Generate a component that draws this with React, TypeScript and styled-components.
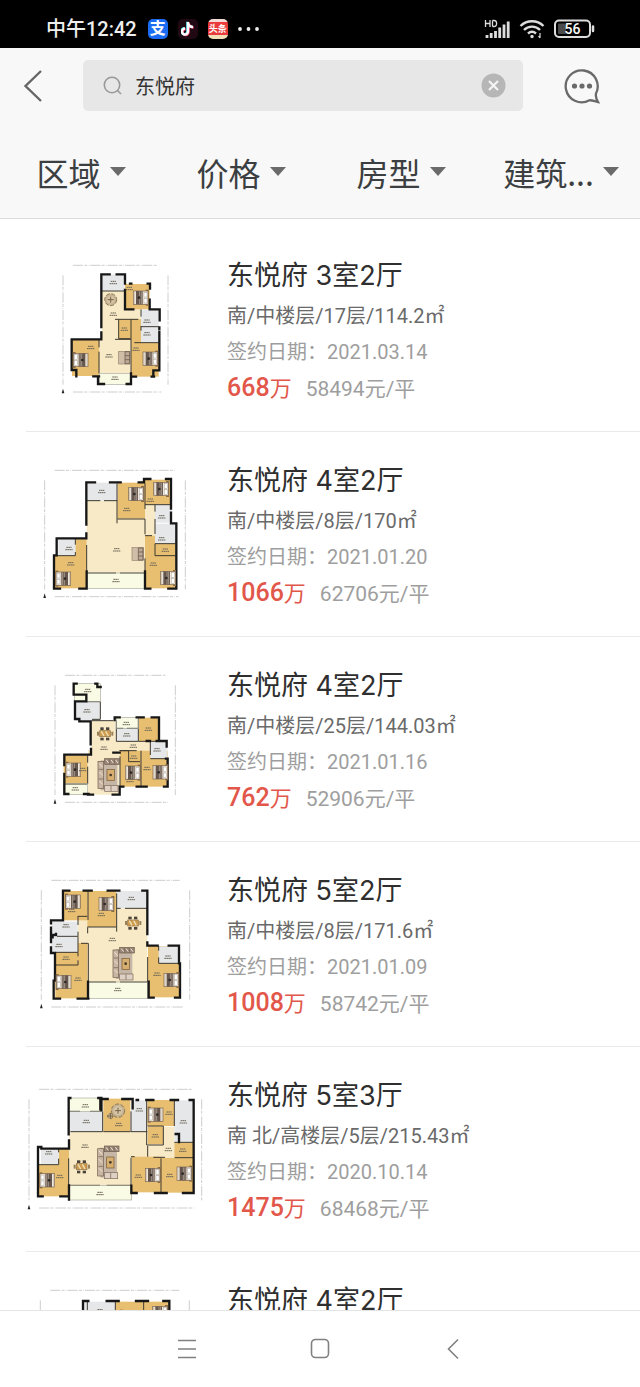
import React from 'react';
import styled, { createGlobalStyle } from 'styled-components';

const GlobalStyle = createGlobalStyle`
  * { box-sizing: border-box; }
  body { margin: 0; background: #fff; color: #333; font-family: Roboto, "Noto Sans CJK SC", sans-serif; }
  button { border: 0; padding: 0; background: none; color: inherit; font: inherit; cursor: pointer; }
  svg { display: block; }
  h2, p { margin: 0; font-weight: 400; }
`;

const Screen = styled.div`
  display: flex;
  flex-direction: column;
  height: 100vh;
`;

const StatusBar = styled.div`
  display: flex;
  align-items: center;
  flex: none;
  height: 48px;
  padding: 9px 45px 0 46px;
  background: #000;
  color: #eee;
`;
const Clock = styled.time`
  font-size: 20px;
  font-weight: 500;
  line-height: 24px;
  margin-right: 11px;
`;
const AppBadges = styled.div`
  display: flex;
  align-items: center;
  gap: 10px;
  flex: 1;
`;
const AppBadge = styled.span<{ $bg: string; $size: number }>`
  display: flex;
  align-items: center;
  justify-content: center;
  width: 20px;
  height: 20px;
  border-radius: 5px;
  background: ${p => p.$bg};
  color: #fff;
  font-size: ${p => p.$size}px;
  line-height: 20px;
  font-weight: 700;
  overflow: hidden;
`;
const Signals = styled.div`
  display: flex;
  align-items: center;
  gap: 9px;
`;

const Header = styled.header`
  flex: none;
  background: #f8f8f8;
  border-bottom: 1px solid #dcdcdc;
`;
const SearchRow = styled.div`
  display: grid;
  grid-template-columns: 83px 1fr 117px;
  align-items: center;
  padding: 12px 0 18px;
`;
const IconButton = styled.button`
  display: flex;
  align-items: center;
  justify-content: center;
  height: 51px;
`;
const BackButton = styled(IconButton)`
  justify-content: flex-start;
  padding-left: 23px;
`;
const SearchBox = styled.label`
  display: flex;
  align-items: center;
  height: 51px;
  padding: 0 17px 0 20px;
  border-radius: 5px;
  background: #e7e7e7;
`;
const SearchInput = styled.input`
  flex: 1;
  min-width: 0;
  margin-left: 12px;
  padding: 2px 0 0;
  border: 0;
  outline: 0;
  background: none;
  color: #333;
  font: 20px/28px Roboto, "Noto Sans CJK SC", sans-serif;
`;
const Filters = styled.nav`
  display: grid;
  grid-template-columns: repeat(4, 1fr);
  height: 89px;
`;
const FilterButton = styled.button`
  display: flex;
  align-items: center;
  justify-content: center;
  gap: 9px;
  padding: 0 0 4px 2px;
  color: #3c3f41;
  font-family: "Noto Sans CJK SC", sans-serif;
  font-size: 32px;
  line-height: 40px;
`;
const Caret = styled.span`
  border: 8px solid transparent;
  border-top: 9px solid #6a6a6a;
  border-bottom: 0;
`;

const List = styled.ul`
  flex: 1;
  min-height: 0;
  overflow: hidden;
  list-style: none;
  margin: 0;
  padding: 8px 0 0 26px;
`;
const Item = styled.li`
  display: flex;
  gap: 17px;
  padding: 23px 0 21px;
  border-bottom: 1px solid #e9e9e9;
`;
const PlanBox = styled.div`
  flex: none;
  width: 184px;
  height: 160px;
`;
const Info = styled.div`
  flex: 1;
  min-width: 0;
  padding-top: 6px;
`;
const Title = styled.h2`
  margin-bottom: 2px;
  font-family: Inter, "Noto Sans CJK SC", sans-serif;
  font-size: 27px;
  line-height: 40px;
  color: #2f2f2f;
`;
const Detail = styled.p<{ $color: string }>`
  font-size: 20px;
  line-height: 36px;
  color: ${p => p.$color};
`;
const PriceLine = styled.p`
  display: flex;
  align-items: baseline;
  gap: 14px;
  line-height: 36px;
`;
const Price = styled.strong`
  font-size: 25px;
  font-weight: 500;
  color: #e2574a;
`;
const PriceUnit = styled.span`
  font-size: 22px;
  font-weight: 400;
`;
const UnitPrice = styled.span`
  font-size: 21px;
  color: #9e9e9e;
`;

const SystemNav = styled.nav`
  display: flex;
  align-items: center;
  justify-content: center;
  gap: 93px;
  flex: none;
  height: 77px;
  border-top: 1px solid #e4e4e4;
  background: #fff;
`;
const NavButton = styled(IconButton)`
  width: 40px;
  height: 48px;
`;

type Box = [number, number, number, number];
type Bed = [number, number, 'l' | 'r'];

interface Plan {
  wood: Box[];
  cream: string;
  tile: Box[];
  balcony: Box[];
  walls: string;
  thin: string;
  beds: Bed[];
  labels: [number, number][];
  tables?: [number, number][];
  round?: [number, number, number][];
  sofas?: [number, number][];
  smallSofas?: [number, number][];
  frame: Box;
}

const Boxes = ({ items, fill }: { items: Box[]; fill: string }) => (
  <>{items.map(([x, y, w, h], i) => <rect key={i} x={x} y={y} width={w} height={h} fill={fill} />)}</>
);

const BedShape = ({ x, y, side }: { x: number; y: number; side: 'l' | 'r' }) => (
  <g transform={side === 'l' ? `translate(${x} ${y})` : `translate(${x + 48} ${y}) scale(-1 1)`}>
    <rect x="0" y="-4" width="9" height="48" fill="#8b6b43" />
    <rect x="2" y="0" width="44" height="40" fill="#eee6da" stroke="#77604a" strokeWidth="2" />
    <rect x="5" y="4" width="9" height="14" fill="#fff" stroke="#8d8178" strokeWidth="1" />
    <rect x="5" y="22" width="9" height="14" fill="#fff" stroke="#8d8178" strokeWidth="1" />
    <rect x="18" y="0" width="20" height="40" fill="#65564e" />
    <path d="M22 1v38M27 1v38M43 1v38" stroke="#c4b6a8" strokeWidth="2" />
    <circle cx="29" cy="20" r="4" fill="#2e2926" />
  </g>
);

const TableShape = ({ x, y }: { x: number; y: number }) => (
  <g transform={`translate(${x} ${y})`} fill="#4c443b">
    <rect x="8" y="10" width="32" height="18" fill="#cf9c4e" stroke="#8d7146" strokeWidth="2" />
    <rect x="10" y="0" width="10" height="8" /><rect x="27" y="0" width="10" height="8" />
    <rect x="10" y="31" width="10" height="8" /><rect x="27" y="31" width="10" height="8" />
    <rect x="0" y="13" width="6" height="12" fill="#9b8159" /><rect x="43" y="13" width="6" height="12" fill="#9b8159" />
    <path d="M13 12l8 14M26 12l8 14" stroke="#eee1b9" strokeWidth="4" />
  </g>
);

const SofaShape = ({ x, y }: { x: number; y: number }) => (
  <g transform={`translate(${x} ${y})`}>
    <rect x="8" y="5" width="50" height="90" fill="#c6b6a6" />
    <rect x="0" y="8" width="17" height="82" fill="#c9b6a2" stroke="#6e5b4b" strokeWidth="2" />
    <rect x="20" y="0" width="44" height="17" fill="#9a8777" stroke="#6e5b4b" strokeWidth="2" />
    <rect x="20" y="80" width="40" height="18" fill="#ded1c3" stroke="#78685a" strokeWidth="2" />
    <path d="M2 32h14M2 61h14M35 2v14M49 2v14M39 81v16" stroke="#6e5b4b" strokeWidth="2" />
    <path d="M4 15l10 10M4 40l10 10M4 67l10 10M25 4l7 9M39 4l7 9M53 4l7 9" stroke="#efe5da" strokeWidth="3" />
    <rect x="27" y="33" width="22" height="33" fill="#d6ae70" stroke="#76552e" strokeWidth="2" />
    <circle cx="38" cy="49" r="4" fill="#43372a" />
  </g>
);

const FloorPlan = ({ plan }: { plan: Plan }) => {
  const [fx, fy, fr, fb] = plan.frame;
  return (
    <svg width="184" height="160" viewBox="18 0 552 480" role="img" aria-label="户型图">
      <g fill="none" stroke="#b5b5b5" strokeWidth="2" strokeDasharray="30 4 9 4 2 3">
        <path d={`M${fx + 30} ${fy}H${fr - 30}M${fx + 30} ${fb}H${fr - 20}`} />
        <path d={`M${fx} ${fy + 30}V${fb - 22}M${fr} ${fy + 30}V${fb - 22}`} />
      </g>
      <path d={`M${fx - 4} ${fb + 4}l4-14 4 14z`} fill="#222" />
      <path d={plan.cream} fill="#f8eac6" />
      <Boxes items={plan.wood} fill="#e8bf70" />
      <Boxes items={plan.tile} fill="#e5e7e9" />
      <Boxes items={plan.balcony} fill="#fafbe5" />
      <path d={plan.thin} fill="none" stroke="#3d3830" strokeWidth="3" />
      {plan.balcony.map(([x, y, w, h], i) => (
        <rect key={i} x={x} y={y} width={w} height={h} fill="none" stroke="#a9aaa0" strokeWidth="2" />
      ))}
      <path d={plan.walls} fill="none" stroke="#171717" strokeWidth="7" strokeLinecap="square" />
      {plan.beds.map(([x, y, side], i) => <BedShape key={i} x={x} y={y} side={side} />)}
      {plan.tables?.map(([x, y], i) => <TableShape key={i} x={x} y={y} />)}
      {plan.sofas?.map(([x, y], i) => <SofaShape key={i} x={x} y={y} />)}
      {plan.smallSofas?.map(([x, y], i) => (
        <g key={i} transform={`translate(${x} ${y})`}>
          <rect width="34" height="38" fill="#cfbda7" stroke="#95816d" strokeWidth="2" />
          <path d="M19 1h14v36h-14zM20 13h13M20 25h13" fill="#bda995" stroke="#594a40" strokeWidth="2" />
        </g>
      ))}
      {plan.round?.map(([x, y, r], i) => (
        <g key={i}>
          <circle cx={x} cy={y} r={r} fill="#c7b391" stroke="#8a785b" strokeWidth="3" strokeDasharray="12 5" />
          <circle cx={x} cy={y} r={Math.max(r - 7, 4)} fill="#d5c5a7" />
          <path d={`M${x - 9} ${y}h18M${x} ${y - 9}v18`} stroke="#776347" strokeWidth="3" />
        </g>
      ))}
      <g stroke="#6a6457" strokeWidth="3">
        {plan.labels.map(([x, y], i) => (
          <path key={i} d={`M${x - 8} ${y}h16M${x - 11} ${y + 7}h22`} strokeDasharray="5 1" />
        ))}
      </g>
    </svg>
  );
};

const plans: Plan[] = [
  {
    frame: [129, 46, 444, 426],
    cream: 'M246 122H315V178H362V208H332V370H238V268H246Z',
    wood: [[315, 102, 74, 76], [296, 208, 67, 58], [333, 208, 30, 72], [333, 278, 83, 102], [156, 268, 82, 110]],
    tile: [[246, 73, 68, 49], [363, 179, 53, 49], [363, 231, 53, 47]],
    balcony: [[238, 370, 96, 33]],
    thin: 'M246 123H315M296 208V266H332M333 208V266M285 208H355M285 268H333M363 178V200M363 228V242M363 230H416M343 278H416M237 268V292M333 266V370M237 305V370',
    walls: 'M244 231V73H269M290 73H315V101M330 101H334M383 101H390V116M389 149V178H419V211M418 232V237M418 246V361H400V380M315 120V178H340M244 247V268H155V360H169V379M230 379H237M220 379H234V402H252M320 402H333V370M333 380H348M395 380H402',
    beds: [[338, 123, 'r'], [158, 310, 'l'], [367, 306, 'r']],
    labels: [[280, 94], [328, 112], [280, 189], [381, 210], [381, 248], [313, 234], [212, 289], [348, 294], [267, 314], [285, 381]],
    round: [[272, 149, 18]],
    smallSofas: [[296, 304]],
  },
  {
    frame: [74, 46, 496, 425],
    cream: 'M200 137H292V192H375V148H405V242H375V354H200Z',
    wood: [[292, 83, 83, 108], [375, 74, 77, 75], [375, 242, 92, 158], [104, 302, 96, 98], [166, 251, 34, 52]],
    tile: [[200, 83, 92, 54], [405, 149, 50, 54], [405, 206, 62, 60], [115, 252, 51, 49]],
    balcony: [[200, 354, 175, 46]],
    thin: 'M200 137H241M252 137H292M291 85V205M292 192H375M375 85V162M375 149H453M405 149V170M405 192V237M405 266H467M405 266V302H467M375 192V238M375 242H396M166 252V269M166 291V302H107M200 354H288M300 354H375M200 270V354M375 310V354',
    walls: 'M199 209V82H225M270 82H302M356 82H372V72H391M438 72H453V161M453 173V205H469V401H460M199 235V250H110V301H102V401H120M178 401H200V349M375 349V401H391M445 401H468',
    beds: [[324, 97, 'r'], [399, 82, 'r'], [106, 351, 'l'], [420, 349, 'r']],
    labels: [[245, 106], [320, 160], [391, 132], [425, 182], [425, 248], [436, 282], [147, 277], [152, 323], [290, 281], [400, 324], [288, 373]],
    smallSofas: [[336, 278]],
  },
  {
    frame: [105, 46, 466, 427],
    cream: 'M214 182H287V244H390V272H300V290H298V404H204V270H214Z',
    wood: [[356, 173, 58, 70], [300, 272, 65, 108], [364, 272, 79, 108], [131, 286, 72, 86]],
    tile: [[166, 125, 74, 56], [289, 205, 66, 39], [391, 243, 51, 53]],
    balcony: [[164, 71, 77, 54], [289, 172, 67, 33], [131, 371, 72, 33]],
    thin: 'M199 125H241V178H216M289 181V244H354M289 205H310M320 205H355M355 175V244H414M391 243V285M391 296H443M298 272H326V305H360M363 272V380M300 289V380M203 286V308M203 320V372H131M300 272H350M215 182H280',
    walls: 'M170 71H161V104H199V124H165V177H178V184H212V253M213 267V284H133V315M133 342V402H145M192 402H206M226 71H232V81H242M284 180V172H299M350 172H371M395 172H417V241M380 243H390M410 243H440V260M438 296H443V380H432M380 380H350M310 380H299V404H278M219 404H204M280 278H299',
    beds: [[136, 309, 'l'], [314, 318, 'r'], [397, 317, 'r']],
    labels: [[203, 88], [201, 149], [319, 187], [320, 221], [385, 204], [340, 255], [411, 266], [341, 288], [188, 325], [166, 383], [252, 261], [330, 358], [381, 322]],
    tables: [[231, 202]],
    sofas: [[234, 296]],
  },
  {
    frame: [64, 46, 509, 426],
    cream: 'M174 154H205V187H290V130H382V351H205V234H174Z',
    wood: [[129, 78, 73, 88], [202, 78, 87, 108], [106, 234, 97, 166], [384, 243, 96, 154]],
    tile: [[290, 78, 90, 51], [94, 170, 79, 43], [94, 216, 80, 45], [416, 244, 62, 51]],
    balcony: [[205, 351, 178, 49]],
    thin: 'M204 78V165M202 186H289M290 85V200M290 130H302M315 130H383M173 154H202M174 154V180M174 200V261M107 262H174V274M107 300H174V286M203 187V205M173 214H111M183 235H205V351H288M300 351H383V276M416 243V257M416 277V295H478',
    walls: 'M148 77H129V166H93V175M93 188V210H108V207M98 217H93V231M93 247V264H105V347H101V401H120M173 401H205M191 77H215M263 77H298M367 77H382V207M382 232V242H413M446 242H477V295H480V398H465M401 398H386V350M204 350V401',
    beds: [[135, 90, 'l'], [235, 97, 'r'], [107, 331, 'l'], [430, 325, 'r']],
    labels: [[155, 133], [244, 145], [334, 97], [138, 179], [117, 238], [138, 276], [277, 220], [174, 339], [411, 324], [444, 273], [293, 370]],
    tables: [[315, 155]],
    sofas: [[279, 247]],
  },
  {
    frame: [27, 58, 545, 414],
    cream: 'M147 186H335V184H382V224H430V170H463V262H335V346H147Z',
    wood: [[250, 86, 81, 99], [382, 90, 81, 78], [383, 169, 46, 54], [463, 218, 58, 45], [335, 260, 88, 107], [423, 263, 98, 105], [55, 285, 92, 94], [116, 236, 31, 52]],
    tile: [[150, 125, 98, 60], [333, 91, 47, 94], [463, 91, 58, 125], [63, 234, 53, 49]],
    balcony: [[146, 84, 102, 40], [147, 347, 188, 43]],
    thin: 'M148 124H180M210 124H248V185H151M250 185H332M333 124V185H382M380 90V225H430M383 168H430V225M463 90V168M463 217H519M464 263H519M383 228V260M333 263V346H260M240 346H147M423 265V368M333 260H344M400 262H435M116 234V247M116 266V284H55M146 265V375',
    walls: 'M151 84H146V193M147 211V236H64V231H54V379H68M121 379H147V368M147 346V389M235 84H241V118M244 84V120M249 87H263M307 87H338V115M350 90H354M379 90H400M452 90H474M509 90H521V369H489M440 369H405M350 369H334V347M467 192H477V216',
    beds: [[383, 114, 'l'], [58, 311, 'l'], [374, 295, 'r'], [469, 291, 'r']],
    labels: [[196, 104], [199, 151], [296, 160], [358, 116], [447, 126], [406, 194], [490, 152], [488, 237], [445, 235], [86, 245], [119, 316], [355, 315], [449, 313], [195, 225], [240, 367]],
    tables: [[161, 271]],
    round: [[294, 122, 20], [271, 138, 8]],
    sofas: [[233, 228]],
  },
  {
    frame: [61, 46, 508, 426],
    cream: 'M187 160H440V340H187Z',
    wood: [[286, 80, 85, 80], [371, 80, 76, 80]],
    tile: [[190, 80, 96, 80]],
    balcony: [],
    thin: 'M286 80V160M371 80V160M202 80V105',
    walls: 'M189 160V78H205M260 78H296M348 78H384M430 78H448V160',
    beds: [[300, 108, 'l'], [396, 94, 'r']],
    labels: [[240, 104]],
  },
];

const listings = [
  { title: '东悦府 3室2厅', detail: '南/中楼层/17层/114.2㎡', date: '2021.03.14', price: '668', unit: '58494元/平' },
  { title: '东悦府 4室2厅', detail: '南/中楼层/8层/170㎡', date: '2021.01.20', price: '1066', unit: '62706元/平' },
  { title: '东悦府 4室2厅', detail: '南/中楼层/25层/144.03㎡', date: '2021.01.16', price: '762', unit: '52906元/平' },
  { title: '东悦府 5室2厅', detail: '南/中楼层/8层/171.6㎡', date: '2021.01.09', price: '1008', unit: '58742元/平' },
  { title: '东悦府 5室3厅', detail: '南 北/高楼层/5层/215.43㎡', date: '2020.10.14', price: '1475', unit: '68468元/平' },
  { title: '东悦府 4室2厅' },
];

const NoteIcon = () => (
  <svg width="14" height="16" viewBox="0 0 14 16" fill="none" strokeWidth="2.4">
    <path d="M7 1v9.500a3 3 0 1 1-3-3M7 2c.5 2.500 2.500 4 5 4" stroke="#35d5dc" transform="translate(-.7 -.3)" />
    <path d="M7 1v9.500a3 3 0 1 1-3-3M7 2c.5 2.500 2.500 4 5 4" stroke="#ed3d68" transform="translate(.7 .5)" />
    <path d="M7 1v9.500a3 3 0 1 1-3-3M7 2c.5 2.500 2.500 4 5 4" stroke="#fff" />
  </svg>
);

const StatusIcons = () => (
  <Signals>
    <svg width="26" height="20" viewBox="0 0 26 20" fill="none" stroke="#ddd">
      <path d="M1.500 1v7M6 1v7M1.500 4.500H6M8.500 1.500v6M8.500 1.500h1.500c3.500 0 3.500 6 0 6H8.500" strokeWidth="1.300" />
      <path d="M3 19v-3M7.200 19v-5M11.500 19V12M15.700 19V8.500M20 19V5.500M24.200 19V2.500" strokeWidth="2.800" />
    </svg>
    <svg width="26" height="20" viewBox="0 0 26 20" fill="none" stroke="#ddd" strokeWidth="2.400">
      <path d="M1.500 7c6.500-6.300 16.500-6.300 23 0M5 11c4.500-4.500 11.500-4.500 16 0M9 14.500c2.500-2.300 5.500-2.300 8 0" />
      <circle cx="13" cy="17.500" r="1" fill="#ddd" strokeWidth="1.500" />
      <path d="M21 14v5M19.500 17l1.500 2" strokeWidth="1.200" />
    </svg>
    <svg width="41" height="20" viewBox="0 0 41 20">
      <rect x="1" y="1.500" width="35" height="16.500" rx="4" fill="none" stroke="#ddd" strokeWidth="2" />
      <rect x="4" y="4.500" width="8" height="10.500" rx="1" fill="#4b4b4b" />
      <path d="M39 7.500v4.500" stroke="#ddd" strokeWidth="2.500" strokeLinecap="round" />
      <text x="18.500" y="15" textAnchor="middle" fill="#fff" fontFamily="Roboto, sans-serif" fontSize="14" fontWeight="500">56</text>
    </svg>
  </Signals>
);

export default function App() {
  return (
    <Screen>
      <GlobalStyle />
      <StatusBar>
        <Clock>中午12:42</Clock>
        <AppBadges>
          <AppBadge $bg="#1b6cf2" $size={16}>支</AppBadge>
          <AppBadge $bg="#210914" $size={16}><NoteIcon /></AppBadge>
          <AppBadge $bg="linear-gradient(#f3dcd8 0 3px, #e93b3c 3px 16px, #f1dfb7 16px)" $size={9}>头条</AppBadge>
          <svg width="22" height="4" viewBox="0 0 22 4" fill="#eee">
            <circle cx="2" cy="2" r="1.900" /><circle cx="10.500" cy="2" r="1.900" /><circle cx="19" cy="2" r="1.900" />
          </svg>
        </AppBadges>
        <StatusIcons />
      </StatusBar>

      <Header>
        <SearchRow>
          <BackButton aria-label="返回">
            <svg width="20" height="32" viewBox="0 0 20 32" fill="none" stroke="#666" strokeWidth="2.400">
              <path d="M18 1L2.500 16 18 31" />
            </svg>
          </BackButton>
          <SearchBox>
            <svg width="20" height="20" viewBox="0 0 20 20" fill="none" stroke="#999" strokeWidth="1.600">
              <circle cx="9" cy="9" r="7.700" /><path d="M14.500 14.500l3.500 3.500" />
            </svg>
            <SearchInput type="text" aria-label="搜索小区" defaultValue="东悦府" />
            <IconButton type="button" aria-label="清除">
              <svg width="25" height="25" viewBox="0 0 25 25">
                <circle cx="12.500" cy="12.500" r="12" fill="#b6b6b6" />
                <path d="M8 8l9 9M17 8l-9 9" stroke="#f4f4f4" strokeWidth="2.200" />
              </svg>
            </IconButton>
          </SearchBox>
          <IconButton aria-label="消息">
            <svg width="36" height="36" viewBox="0 0 36 36" fill="none" stroke="#6a6a6a" strokeWidth="2.300">
              <path d="M32 25.500A16 16 0 1 0 25.500 32.300C28 32 31 33.500 34 34 32.500 31.500 31.500 28 32 25.500Z" />
              <g fill="#6a6a6a" stroke="none"><circle cx="10.500" cy="18" r="2.600" /><circle cx="18" cy="18" r="2.600" /><circle cx="25.500" cy="18" r="2.600" /></g>
            </svg>
          </IconButton>
        </SearchRow>
        <Filters aria-label="筛选">
          {['区域', '价格', '房型', '建筑...'].map(name => (
            <FilterButton key={name} type="button" aria-haspopup="listbox">{name}<Caret /></FilterButton>
          ))}
        </Filters>
      </Header>

      <List>
        {listings.map((item, i) => (
          <Item key={i}>
            <PlanBox><FloorPlan plan={plans[i]} /></PlanBox>
            <Info>
              <Title>{item.title}</Title>
              {item.detail && (
                <>
                  <Detail $color="#6a6a6a">{item.detail}</Detail>
                  <Detail $color="#9e9e9e">签约日期：{item.date}</Detail>
                  <PriceLine>
                    <Price>{item.price}<PriceUnit>万</PriceUnit></Price>
                    <UnitPrice>{item.unit}</UnitPrice>
                  </PriceLine>
                </>
              )}
            </Info>
          </Item>
        ))}
      </List>

      <SystemNav aria-label="系统导航">
        <NavButton aria-label="最近任务">
          <svg width="20" height="20" viewBox="0 0 20 20" stroke="#808080" strokeWidth="1.600"><path d="M1 1.500h18M1 10h18M1 18.500h18" /></svg>
        </NavButton>
        <NavButton aria-label="主屏幕">
          <svg width="20" height="22" viewBox="0 0 20 22" fill="none" stroke="#808080" strokeWidth="1.600"><rect x="1.500" y="1.500" width="17" height="18" rx="4" /></svg>
        </NavButton>
        <NavButton aria-label="后退">
          <svg width="12" height="22" viewBox="0 0 12 22" fill="none" stroke="#808080" strokeWidth="1.600"><path d="M11 1.500L1.500 11 11 20.500" /></svg>
        </NavButton>
      </SystemNav>
    </Screen>
  );
}
